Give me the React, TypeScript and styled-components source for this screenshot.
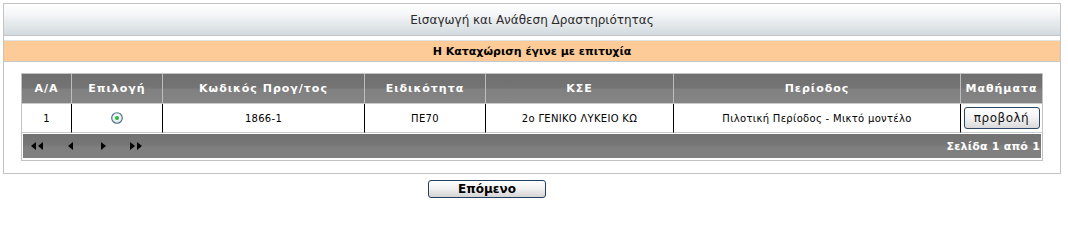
import React from "react";
import styled, { createGlobalStyle } from "styled-components";

const GlobalStyle = createGlobalStyle`
  body {
    margin: 0;
    background: #ffffff;
    font-family: "DejaVu Sans", Verdana, sans-serif;
    color: #000;
  }
`;

const Page = styled.div`
  padding: 3px 0 0 3px;
`;

const Panel = styled.div`
  width: 1058px;
  box-sizing: border-box;
  border: 1px solid #c3c3c3;
  padding-bottom: 12px;
`;

const TitleBar = styled.div`
  height: 31px;
  border-bottom: 1px solid #c4c4c4;
  background: linear-gradient(#ffffff 0%, #f6f7f8 30%, #d2dadf 100%);
  display: flex;
  align-items: center;
  justify-content: center;
  font-size: 12px;
  color: #2b2b2b;
`;

const Notice = styled.div`
  margin-top: 4px;
  height: 20px;
  border-top: 1px solid #e2e2e2;
  border-bottom: 1px solid #c8c8c8;
  background: #fdcb98;
  display: flex;
  align-items: center;
  justify-content: center;
  font-size: 11px;
  font-weight: bold;
  color: #000;
`;

const TableArea = styled.div`
  padding: 11px 17px 0;
`;

const Grid = styled.div`
  width: 1022px;
  box-sizing: border-box;
  border: 1px solid #c3c3c3;
  display: grid;
  grid-template-columns: 50px 91px 202px 121px 188px 287px 81px;
`;

const HeadCell = styled.div<{ $last?: boolean }>`
  box-sizing: border-box;
  height: 30px;
  border-right: ${({ $last }) => ($last ? "none" : "1px solid #bdbdbd")};
  border-bottom: 1px solid #cacaca;
  background: linear-gradient(#6f6f6f 0%, #747474 48%, #808080 52%, #858585 100%);
  display: flex;
  align-items: center;
  justify-content: center;
  color: #ffffff;
  font-size: 11px;
  font-weight: bold;
  letter-spacing: 1px;
  white-space: nowrap;
`;

const Cell = styled.div<{ $last?: boolean }>`
  box-sizing: border-box;
  height: 29px;
  border-right: ${({ $last }) => ($last ? "none" : "1px solid #000")};
  border-bottom: 1px solid #cacaca;
  display: flex;
  align-items: center;
  justify-content: center;
  font-size: 10px;
  letter-spacing: 0.3px;
  color: #000;
  white-space: nowrap;
`;

const PagerWrap = styled.div`
  grid-column: 1 / -1;
  padding: 1px 1px 2px;
`;

const Pager = styled.div`
  height: 24px;
  background: linear-gradient(#727272 0%, #767676 45%, #7f7f7f 55%, #808080 100%);
  display: flex;
  align-items: center;
  gap: 5px;
`;

const PagerButton = styled.button`
  width: 28px;
  height: 24px;
  padding: 0;
  border: none;
  background: transparent;
  display: flex;
  align-items: center;
  justify-content: center;
  cursor: pointer;
`;

const PageInfo = styled.span`
  margin-left: auto;
  padding-right: 1px;
  color: #ffffff;
  font-size: 11px;
  font-weight: bold;
  letter-spacing: 0.2px;
`;

const ViewButton = styled.button`
  width: 76px;
  height: 22px;
  padding: 0;
  border: 1px solid #2a4766;
  border-radius: 3px;
  background: linear-gradient(#ffffff 0%, #f3f3f3 50%, #d9d9d9 100%);
  font-family: inherit;
  font-size: 12px;
  letter-spacing: 0.5px;
  color: #111;
`;

const Footer = styled.div`
  padding: 4px 0 0 425px;
`;

const NextButton = styled.button`
  width: 118px;
  height: 18px;
  padding: 0;
  border: 1px solid #263f5e;
  border-radius: 3px;
  background: linear-gradient(#ffffff 0%, #f0f0f0 50%, #d4d4d4 100%);
  font-family: inherit;
  font-size: 12px;
  font-weight: bold;
  color: #000;
`;

const Radio = () => (
  <svg width="12" height="12" viewBox="0 0 12 12">
    <defs>
      <radialGradient id="rb" cx="50%" cy="40%" r="60%">
        <stop offset="0%" stopColor="#ffffff" />
        <stop offset="100%" stopColor="#dfe6ea" />
      </radialGradient>
    </defs>
    <circle cx="6" cy="6" r="5.3" fill="url(#rb)" stroke="#4a6f84" strokeWidth="1.1" />
    <circle cx="6" cy="6" r="2" fill="#27b83a" />
  </svg>
);

const Arrow = ({ dir, double }: { dir: "left" | "right"; double?: boolean }) => {
  const w = double ? 12 : 5;
  const tri = (x: number) =>
    dir === "left"
      ? `${x + 5},0 ${x + 5},8 ${x},4`
      : `${x},0 ${x},8 ${x + 5},4`;
  return (
    <svg width={w} height="8" viewBox={`0 0 ${w} 8`}>
      <polygon points={tri(0)} fill="#000" />
      {double && <polygon points={tri(7)} fill="#000" />}
    </svg>
  );
};

const headers = [
  "Α/Α",
  "Επιλογή",
  "Κωδικός Προγ/τος",
  "Ειδικότητα",
  "ΚΣΕ",
  "Περίοδος",
  "Μαθήματα",
];

const row = {
  aa: "1",
  code: "1866-1",
  specialty: "ΠΕ70",
  kse: "2ο ΓΕΝΙΚΟ ΛΥΚΕΙΟ ΚΩ",
  period: "Πιλοτική Περίοδος - Μικτό μοντέλο",
};

const App = () => {
  return (
    <Page>
      <GlobalStyle />
      <Panel>
        <TitleBar>Εισαγωγή και Ανάθεση Δραστηριότητας</TitleBar>
        <Notice>Η Καταχώριση έγινε με επιτυχία</Notice>
        <TableArea>
          <Grid>
            {headers.map((h, idx) => (
              <HeadCell key={h} $last={idx === headers.length - 1}>
                {h}
              </HeadCell>
            ))}
            <Cell>{row.aa}</Cell>
            <Cell>
              <Radio />
            </Cell>
            <Cell>{row.code}</Cell>
            <Cell>{row.specialty}</Cell>
            <Cell>{row.kse}</Cell>
            <Cell>{row.period}</Cell>
            <Cell $last>
              <ViewButton>προβολή</ViewButton>
            </Cell>
            <PagerWrap>
              <Pager>
                <PagerButton>
                  <Arrow dir="left" double />
                </PagerButton>
                <PagerButton>
                  <Arrow dir="left" />
                </PagerButton>
                <PagerButton>
                  <Arrow dir="right" />
                </PagerButton>
                <PagerButton>
                  <Arrow dir="right" double />
                </PagerButton>
                <PageInfo>Σελίδα 1 από 1</PageInfo>
              </Pager>
            </PagerWrap>
          </Grid>
        </TableArea>
      </Panel>
      <Footer>
        <NextButton>Επόμενο</NextButton>
      </Footer>
    </Page>
  );
};

export default App;
